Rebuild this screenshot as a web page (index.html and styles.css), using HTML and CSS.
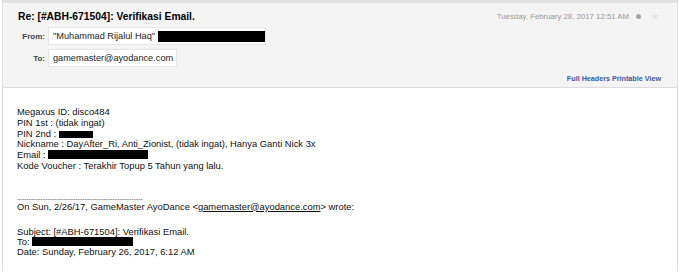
FILE: index.html
```html
<!DOCTYPE html>
<html>
<head>
<meta charset="utf-8">
<link rel="stylesheet" href="styles.css">
</head>
<body>
<div class="mail">
  <div class="head">
    <div class="top-row">
      <h1 class="subject">Re: [#ABH-671504]: Verifikasi Email.</h1>
      <div class="meta">
        <span class="date">Tuesday, February 28, 2017 12:51 AM</span>
        <span class="dot"></span>
        <span class="star">&#9733;</span>
      </div>
    </div>
    <div class="field field-from">
      <span class="label">From:</span>
      <span class="value">"Muhammad Rijalul Haq" <span class="redact r-from"></span></span>
    </div>
    <div class="field">
      <span class="label">To:</span>
      <span class="value">gamemaster@ayodance.com</span>
    </div>
    <div class="links"><a>Full Headers</a> <a>Printable View</a></div>
  </div>
  <div class="body">
    <div class="line">Megaxus ID: disco484</div>
    <div class="line">PIN 1st : (tidak ingat)</div>
    <div class="line">PIN 2nd : <span class="redact r-pin"></span></div>
    <div class="line">Nickname : DayAfter_Ri, Anti_Zionist, (tidak ingat), Hanya Ganti Nick 3x</div>
    <div class="line">Email : <span class="redact r-email"></span></div>
    <div class="line">Kode Voucher : Terakhir Topup 5 Tahun yang lalu.</div>
    <div class="quote">
      <div class="line dashes">------------------------------------------------------</div>
      <div class="line">On Sun, 2/26/17, GameMaster AyoDance &lt;<a class="mail-link">gamemaster@ayodance.com</a>&gt; wrote:</div>
      <div class="gap"></div>
      <div class="line">Subject: [#ABH-671504]: Verifikasi Email.</div>
      <div class="line">To: <span class="redact r-to"></span></div>
      <div class="line">Date: Sunday, February 26, 2017, 6:12 AM</div>
    </div>
  </div>
</div>
</body>
</html>
```
FILE: styles.css
```css
html, body {
  margin: 0;
  padding: 0;
  background: #ffffff;
}
body {
  font-family: "Liberation Sans", Arial, sans-serif;
  color: #222;
}
.mail {
  margin: 0 2px 0 2px;
  border-left: 1px solid #dedede;
  border-right: 1px solid #dedede;
  border-top: 3px solid #e2e2e2;
  height: 271px;
  box-sizing: border-box;
}
.head {
  background: #f4f4f4;
  border-bottom: 1px solid #dcdcdc;
  height: 85px;
  box-sizing: border-box;
  padding: 6px 8px 0 15px;
}
.top-row {
  display: flex;
  justify-content: space-between;
  align-items: center;
  height: 15px;
}
.subject {
  margin: 0;
  font-size: 10.3px;
  font-weight: bold;
  color: #000;
  line-height: 15px;
}
.meta {
  display: flex;
  align-items: center;
}
.date {
  font-size: 7.8px;
  color: #999;
}
.dot {
  width: 5px;
  height: 5px;
  border-radius: 50%;
  background: #a4a4a4;
  margin-left: 7px;
}
.star {
  font-size: 11px;
  color: #e6e6e6;
  margin-left: 9px;
  margin-right: 9px;
}
.field {
  display: flex;
  align-items: center;
  margin-top: 4px;
}
.field-from { margin-top: 3px; }
.label {
  width: 27px;
  text-align: right;
  font-size: 8px;
  font-weight: bold;
  color: #444;
  margin-right: 3px;
}
.value {
  display: flex;
  align-items: center;
  background: #fff;
  border: 1px solid #e6e6e6;
  height: 18px;
  box-sizing: border-box;
  padding: 0 3px 0 4px;
  font-size: 9.2px;
  color: #222;
}
.field-from .value { padding-right: 0; }
.redact {
  display: inline-block;
  background: #000;
  vertical-align: middle;
}
.r-from {
  width: 107px;
  height: 11px;
  margin-left: 3px;
}
.links {
  text-align: right;
  font-size: 7.2px;
  font-weight: bold;
  color: #3a5aa0;
  margin-top: 7px;
  padding-right: 8px;
}
.links a { color: #3a5aa0; }
.body {
  padding: 19px 0 0 14px;
  font-size: 9.4px;
  line-height: 10.8px;
  color: #111;
}
.line { white-space: nowrap; }
.r-pin { width: 34px; height: 7px; vertical-align: -1px; }
.r-email { width: 100px; height: 9px; vertical-align: -1px; }
.r-to { width: 101px; height: 9px; vertical-align: -1px; }
.quote {
  margin-top: 23px;
  line-height: 10px;
}
.dashes {
  font-size: 7px;
  line-height: 7px;
  height: 7px;
  color: #555;
}
.gap { height: 15px; }
.mail-link {
  color: #111;
  text-decoration: underline;
}
```
